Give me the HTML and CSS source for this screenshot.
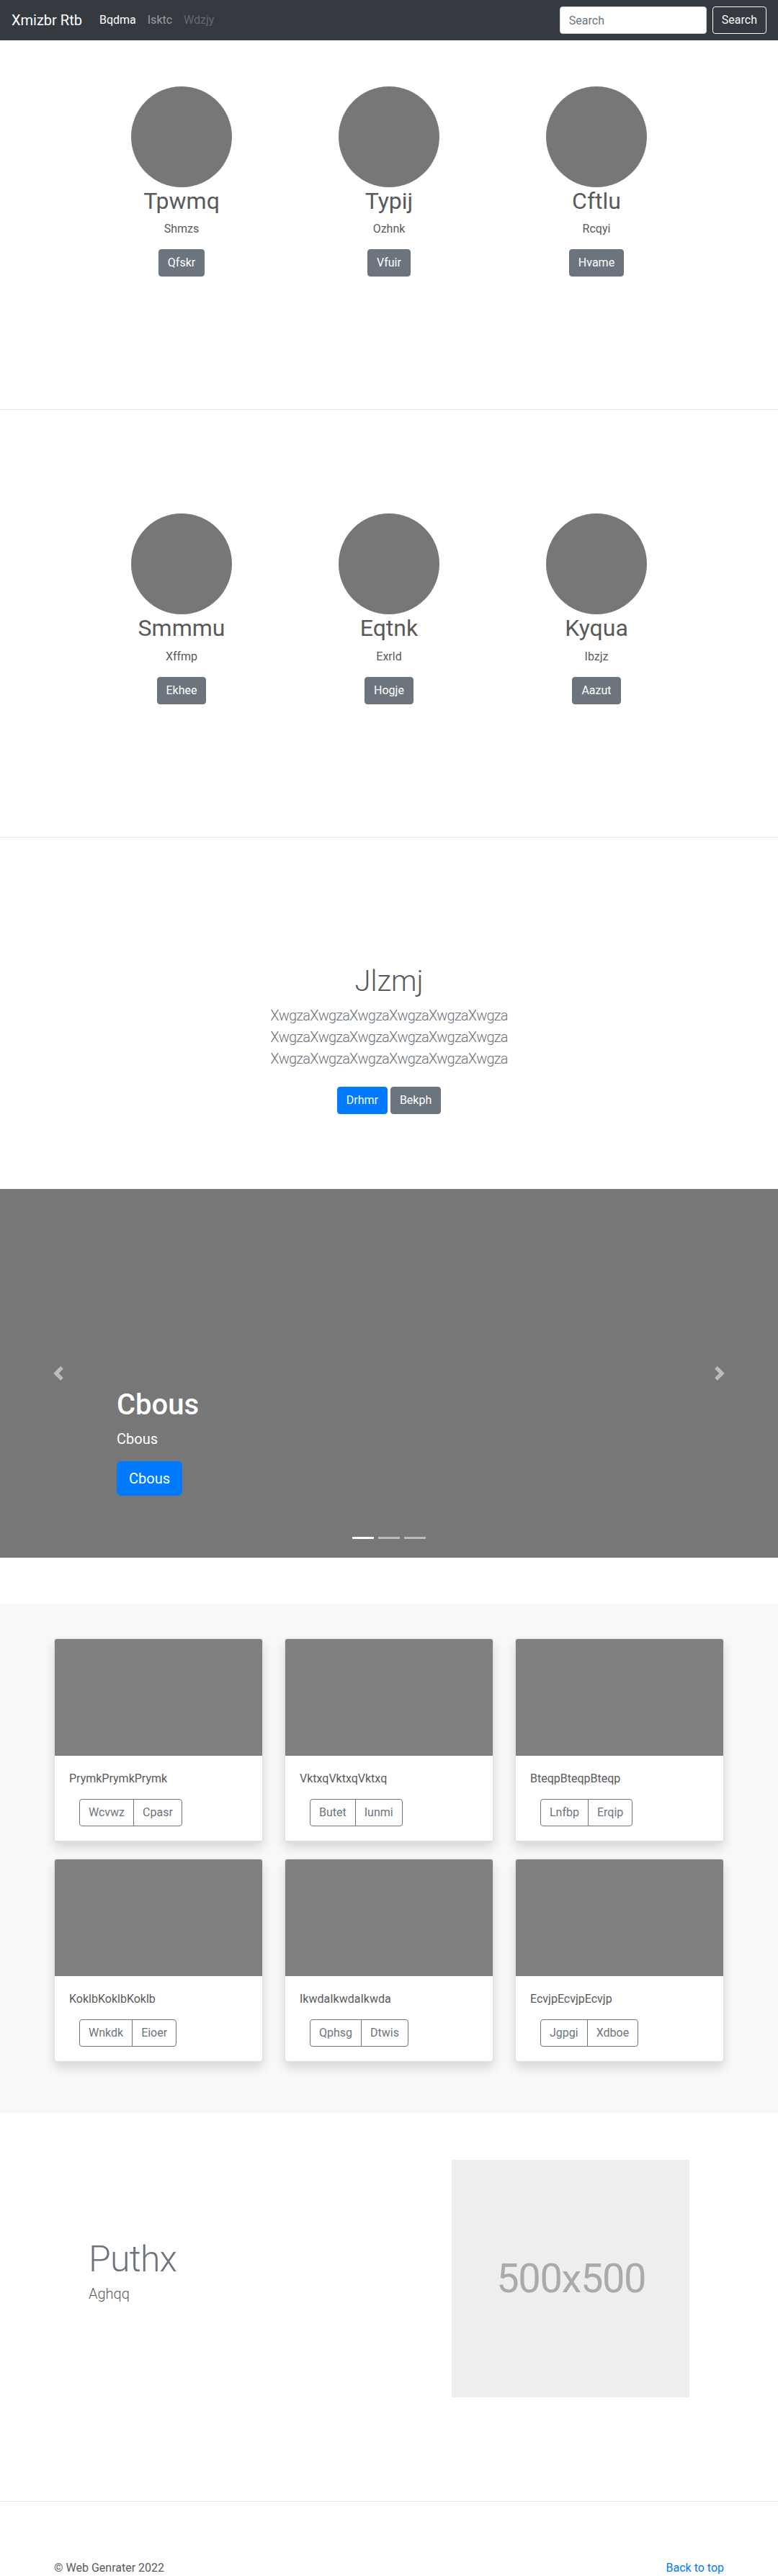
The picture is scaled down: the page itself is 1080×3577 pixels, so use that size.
FILE: index.html
```html
<!DOCTYPE html>
<html lang="en">
<head>
<meta charset="utf-8">
<title>Xmizbr Rtb</title>
<link rel="stylesheet" href="styles.css">
</head>
<body>
<nav class="navbar">
  <a class="brand" href="#">Xmizbr Rtb</a>
  <ul class="nav">
    <li><a class="nav-link active" href="#">Bqdma</a></li>
    <li><a class="nav-link" href="#">Isktc</a></li>
    <li><a class="nav-link disabled" href="#">Wdzjy</a></li>
  </ul>
  <form class="search">
    <input class="search-input" type="text" placeholder="Search">
    <button class="btn btn-outline-light" type="button">Search</button>
  </form>
</nav>

<section class="section">
  <div class="marketing">
    <div class="mcol">
      <div class="circle"></div>
      <h2>Tpwmq</h2>
      <p>Shmzs</p>
      <p><a class="btn btn-secondary" href="#">Qfskr</a></p>
    </div>
    <div class="mcol">
      <div class="circle"></div>
      <h2>Typij</h2>
      <p>Ozhnk</p>
      <p><a class="btn btn-secondary" href="#">Vfuir</a></p>
    </div>
    <div class="mcol">
      <div class="circle"></div>
      <h2>Cftlu</h2>
      <p>Rcqyi</p>
      <p><a class="btn btn-secondary" href="#">Hvame</a></p>
    </div>
  </div>
</section>

<hr class="divider">

<section class="section">
  <div class="marketing">
    <div class="mcol">
      <div class="circle"></div>
      <h2>Smmmu</h2>
      <p>Xffmp</p>
      <p><a class="btn btn-secondary" href="#">Ekhee</a></p>
    </div>
    <div class="mcol">
      <div class="circle"></div>
      <h2>Eqtnk</h2>
      <p>Exrld</p>
      <p><a class="btn btn-secondary" href="#">Hogje</a></p>
    </div>
    <div class="mcol">
      <div class="circle"></div>
      <h2>Kyqua</h2>
      <p>Ibzjz</p>
      <p><a class="btn btn-secondary" href="#">Aazut</a></p>
    </div>
  </div>
</section>

<hr class="divider">

<section class="section jumbo">
  <div class="jumbo-inner">
    <h1 class="jumbo-heading">Jlzmj</h1>
    <p class="lead muted tight">XwgzaXwgzaXwgzaXwgzaXwgzaXwgza<br>XwgzaXwgzaXwgzaXwgzaXwgzaXwgza<br>XwgzaXwgzaXwgzaXwgzaXwgzaXwgza</p>
    <p class="actions"><a class="btn btn-primary" href="#">Drhmr</a> <a class="btn btn-secondary" href="#">Bekph</a></p>
  </div>
</section>

<div class="carousel">
  <div class="carousel-caption">
    <h1>Cbous</h1>
    <p class="caption-text">Cbous</p>
    <p><a class="btn btn-lg btn-primary" href="#">Cbous</a></p>
  </div>
  <a class="control prev" href="#" aria-label="Previous">
    <svg width="20" height="20" viewBox="0 0 8 8"><path fill="#fff" d="M5.25 0l-4 4 4 4 1.5-1.5L4.25 4l2.5-2.5L5.25 0z"/></svg>
  </a>
  <a class="control next" href="#" aria-label="Next">
    <svg width="20" height="20" viewBox="0 0 8 8"><path fill="#fff" d="M2.75 0l-1.5 1.5L3.75 4l-2.5 2.5L2.75 8l4-4-4-4z"/></svg>
  </a>
  <ol class="indicators">
    <li class="active"></li>
    <li></li>
    <li></li>
  </ol>
</div>

<section class="album">
  <div class="container">
    <div class="cards">
      <div class="card">
        <div class="card-img"></div>
        <div class="card-body">
          <p class="card-text">PrymkPrymkPrymk</p>
          <div class="btn-group"><button class="btn btn-outline" type="button">Wcvwz</button><button class="btn btn-outline" type="button">Cpasr</button></div>
        </div>
      </div>
      <div class="card">
        <div class="card-img"></div>
        <div class="card-body">
          <p class="card-text">VktxqVktxqVktxq</p>
          <div class="btn-group"><button class="btn btn-outline" type="button">Butet</button><button class="btn btn-outline" type="button">Iunmi</button></div>
        </div>
      </div>
      <div class="card">
        <div class="card-img"></div>
        <div class="card-body">
          <p class="card-text">BteqpBteqpBteqp</p>
          <div class="btn-group"><button class="btn btn-outline" type="button">Lnfbp</button><button class="btn btn-outline" type="button">Erqip</button></div>
        </div>
      </div>
      <div class="card">
        <div class="card-img"></div>
        <div class="card-body">
          <p class="card-text">KoklbKoklbKoklb</p>
          <div class="btn-group"><button class="btn btn-outline" type="button">Wnkdk</button><button class="btn btn-outline" type="button">Eioer</button></div>
        </div>
      </div>
      <div class="card">
        <div class="card-img"></div>
        <div class="card-body">
          <p class="card-text">IkwdaIkwdaIkwda</p>
          <div class="btn-group"><button class="btn btn-outline" type="button">Qphsg</button><button class="btn btn-outline" type="button">Dtwis</button></div>
        </div>
      </div>
      <div class="card">
        <div class="card-img"></div>
        <div class="card-body">
          <p class="card-text">EcvjpEcvjpEcvjp</p>
          <div class="btn-group"><button class="btn btn-outline" type="button">Jgpgi</button><button class="btn btn-outline" type="button">Xdboe</button></div>
        </div>
      </div>
    </div>
  </div>
</section>

<section class="section">
  <div class="featurette">
    <div class="featurette-text">
      <h2 class="featurette-heading">Puthx</h2>
      <p class="lead">Aghqq</p>
    </div>
    <div class="featurette-media">
      <div class="placeholder"><span class="placeholder-text">500x500</span></div>
    </div>
  </div>
</section>

<hr class="divider">

<footer class="footer">
  <p>&copy; Web Genrater 2022</p>
  <p><a href="#">Back to top</a></p>
</footer>
</body>
</html>
```

FILE: styles.css
```css
* {
  box-sizing: border-box;
}

html,
body {
  margin: 0;
  padding: 0;
}

body {
  font-family: Roboto, "Liberation Sans", Arial, sans-serif;
  font-size: 16px;
  line-height: 1.5;
  color: #5a5a5a;
  background: #fff;
}

a {
  text-decoration: none;
}

p {
  margin: 0 0 16px;
}

h1,
h2 {
  margin: 0 0 8px;
  line-height: 1.2;
}

/* ---------- navbar ---------- */
.navbar {
  display: flex;
  align-items: center;
  height: 56px;
  padding: 8px 16px;
  background: #343a40;
}

.brand {
  font-size: 20px;
  line-height: 30px;
  padding: 5px 0;
  margin-right: 16px;
  color: #fff;
}

.nav {
  display: flex;
  list-style: none;
  margin: 0;
  padding: 0;
}

.nav-link {
  display: block;
  padding: 8px;
  color: rgba(255, 255, 255, 0.5);
}

.nav-link.active {
  color: #fff;
}

.nav-link.disabled {
  color: rgba(255, 255, 255, 0.25);
}

.search {
  display: flex;
  align-items: center;
  margin: 0 0 0 auto;
}

.search-input {
  width: 204px;
  height: 38px;
  padding: 6px 12px;
  margin-right: 8px;
  font-family: inherit;
  font-size: 16px;
  color: #495057;
  background: #fff;
  border: 1px solid #ced4da;
  border-radius: 4px;
}

.search-input::placeholder {
  color: #6c757d;
}

/* ---------- buttons ---------- */
.btn {
  display: inline-block;
  padding: 6px 12px;
  font-family: inherit;
  font-size: 16px;
  font-weight: 400;
  line-height: 24px;
  text-align: center;
  vertical-align: middle;
  border: 1px solid transparent;
  border-radius: 4px;
  cursor: pointer;
}

.btn-outline-light {
  color: #f8f9fa;
  background: transparent;
  border-color: #f8f9fa;
}

.btn-secondary {
  color: #fff;
  background: #6c757d;
  border-color: #6c757d;
}

.btn-primary {
  color: #fff;
  background: #007bff;
  border-color: #007bff;
}

.btn-lg {
  padding: 8px 16px;
  font-size: 20px;
  line-height: 30px;
  border-radius: 6px;
}

.btn-outline {
  color: #6c757d;
  background: transparent;
  border-color: #6c757d;
}

/* ---------- sections ---------- */
.section {
  padding: 64px 0;
}

.divider {
  height: 0;
  margin: 80px 0;
  border: 0;
  border-top: 1px solid rgba(0, 0, 0, 0.1);
}

.marketing {
  display: flex;
  width: 864px;
  margin: 0 auto;
}

.mcol {
  flex: 0 0 288px;
  padding: 0 15px;
  margin-bottom: 24px;
  text-align: center;
}

.circle {
  width: 140px;
  height: 140px;
  margin: 0 auto;
  border-radius: 50%;
  background: #777;
}

.mcol h2 {
  font-size: 32px;
  font-weight: 400;
}

/* ---------- jumbotron ---------- */
.jumbo {
  text-align: center;
}

.jumbo-inner {
  padding: 32px 16px;
}

.jumbo-heading {
  font-size: 40px;
  font-weight: 300;
}

.lead {
  font-size: 20px;
  font-weight: 300;
  line-height: 30px;
}

.tight {
  letter-spacing: -0.8px;
}

.muted {
  color: #6c757d;
}

.actions {
  margin-bottom: 0;
}

.actions .btn {
  margin: 8px 0;
}

/* ---------- carousel ---------- */
.carousel {
  position: relative;
  height: 512px;
  margin-bottom: 64px;
  background: #777;
  overflow: hidden;
}

.carousel-caption {
  position: absolute;
  left: 15%;
  right: 15%;
  bottom: 50px;
  z-index: 10;
  padding: 20px 0;
  color: #fff;
  text-align: left;
}

.carousel-caption h1 {
  font-size: 40px;
  font-weight: 500;
}

.caption-text {
  font-size: 20px;
  line-height: 30px;
}

.control {
  position: absolute;
  top: 0;
  bottom: 0;
  width: 15%;
  display: flex;
  align-items: center;
  justify-content: center;
  opacity: 0.5;
}

.control svg {
  display: block;
}

.control.prev {
  left: 0;
}

.control.next {
  right: 0;
}

.indicators {
  position: absolute;
  left: 15%;
  right: 15%;
  bottom: 0;
  display: flex;
  justify-content: center;
  margin: 0 0 16px;
  padding: 0;
  list-style: none;
}

.indicators li {
  width: 30px;
  height: 3px;
  margin: 10px 3px;
  background: #fff;
  opacity: 0.5;
}

.indicators li.active {
  opacity: 1;
}

/* ---------- album ---------- */
.album {
  padding: 48px 0;
  background: #f8f9fa;
}

.container {
  width: 960px;
  margin: 0 auto;
  padding: 0 15px;
}

.cards {
  display: grid;
  grid-template-columns: repeat(3, 1fr);
  column-gap: 30px;
}

.card {
  margin-bottom: 24px;
  background: #fff;
  border: 1px solid rgba(0, 0, 0, 0.125);
  border-radius: 4px;
  box-shadow: 0 8px 16px rgba(0, 0, 0, 0.15);
  overflow: hidden;
}

.card-img {
  height: 162px;
  background: #808080;
}

.card-body {
  padding: 20px;
}

.card-text {
  margin-bottom: 16px;
}

.btn-group {
  display: inline-flex;
  margin-left: 14px;
}

.btn-group .btn:first-child {
  border-top-right-radius: 0;
  border-bottom-right-radius: 0;
}

.btn-group .btn:last-child {
  margin-left: -1px;
  border-top-left-radius: 0;
  border-bottom-left-radius: 0;
}

/* ---------- featurette ---------- */
.featurette {
  display: flex;
  align-items: center;
  width: 864px;
  margin: 0 auto;
}

.featurette-text {
  flex: 0 0 504px;
  padding: 0 15px;
}

.featurette-media {
  flex: 0 0 360px;
  padding: 0 15px;
}

.featurette-heading {
  margin: 0 0 8px;
  font-size: 50px;
  font-weight: 300;
  line-height: 1;
  letter-spacing: -0.05rem;
  color: #6c757d;
}

.placeholder {
  display: flex;
  align-items: center;
  justify-content: center;
  width: 330px;
  height: 330px;
  font-size: 56px;
  color: #aaa;
  background: #eee;
}

.placeholder-text {
  letter-spacing: -1.4px;
  margin-right: -1.4px;
}

/* ---------- footer ---------- */
.footer {
  display: flex;
  justify-content: space-between;
  width: 960px;
  margin: 0 auto;
  padding: 0 15px;
}

.footer a {
  color: #007bff;
}
```
